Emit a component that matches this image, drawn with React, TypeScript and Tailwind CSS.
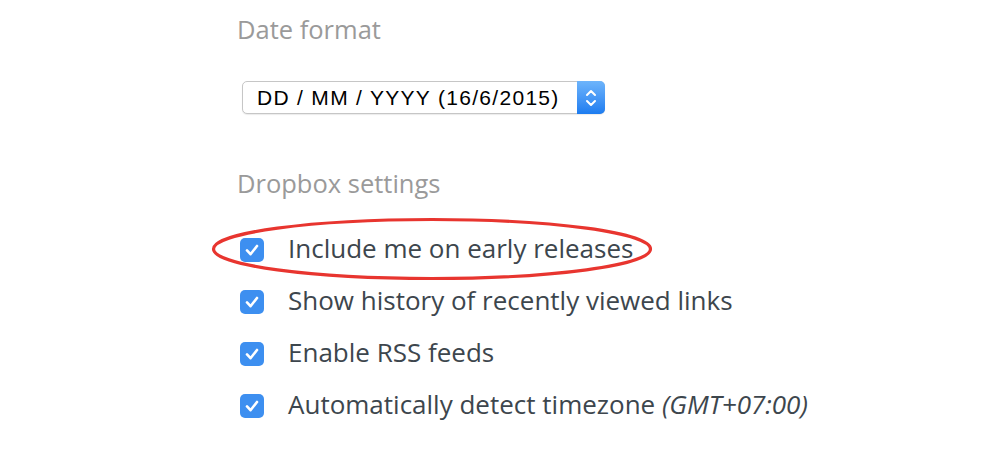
import React from "react";

const items = [
  { label: "Include me on early releases", extra: null as string | null, circled: true },
  { label: "Show history of recently viewed links", extra: null, circled: false },
  { label: "Enable RSS feeds", extra: null, circled: false },
  { label: "Automatically detect timezone", extra: "(GMT+07:00)", circled: false },
];

function Check() {
  return (
    <div className="w-[24px] h-[24px] rounded-[5px] bg-[#3d8ff0] flex items-center justify-center shrink-0">
      <svg width="24" height="24" viewBox="0 0 24 24" fill="none">
        <path d="M7 12.4 L10.5 16.2 L17 8" stroke="#ffffff" strokeWidth="2.6" strokeLinecap="round" strokeLinejoin="round" />
      </svg>
    </div>
  );
}

export default function App() {
  return (
    <div className="w-[1004px] h-[454px] bg-white overflow-hidden font-['Open_Sans',sans-serif]">
      <div className="pl-[237px] pt-[13px] flex flex-col">
        <div className="text-[25.5px] leading-[32px] text-[#9a9a9a]">Date format</div>
        <div className="mt-[36px] ml-[5px] w-[363px] h-[33px] rounded-[5px] border border-[#c6c6c6] shadow-[0_1px_1px_rgba(0,0,0,0.08)] flex items-stretch bg-white">
          <div className="flex-1 flex items-center pl-[14px] font-['Liberation_Sans',Arial,sans-serif] text-[21px] tracking-[1.3px] text-black whitespace-nowrap">
            DD / MM / YYYY (16/6/2015)
          </div>
          <div className="w-[28px] -my-px -mr-px rounded-r-[5px] bg-gradient-to-b from-[#6db4fb] to-[#1b7cf0] flex items-center justify-center">
            <svg width="14" height="24" viewBox="0 0 14 24" fill="none">
              <path d="M3 9 L7 5 L11 9" stroke="#fff" strokeWidth="2" strokeLinecap="round" strokeLinejoin="round" />
              <path d="M3 15 L7 19 L11 15" stroke="#fff" strokeWidth="2" strokeLinecap="round" strokeLinejoin="round" />
            </svg>
          </div>
        </div>
        <div className="mt-[53px] text-[25.5px] leading-[32px] text-[#9a9a9a]">Dropbox settings</div>
        <div className="mt-[25px] flex flex-col">
          {items.map((it) => (
            <div key={it.label} className="relative h-[52px] flex items-center gap-[24px] pl-[3px]">
              {it.circled && (
                <svg className="absolute left-[-26px] top-[-7px]" width="444" height="64" viewBox="0 0 444 64" fill="none">
                  <ellipse cx="221" cy="32" rx="218.5" ry="29.5" stroke="#e8352f" strokeWidth="3.2" />
                </svg>
              )}
              <Check />
              <span className="text-[26px] leading-[48px] pb-[4px] text-[#3d464d] whitespace-nowrap">
                {it.label}
                {it.extra && <span className="italic"> {it.extra}</span>}
              </span>
            </div>
          ))}
        </div>
      </div>
    </div>
  );
}
